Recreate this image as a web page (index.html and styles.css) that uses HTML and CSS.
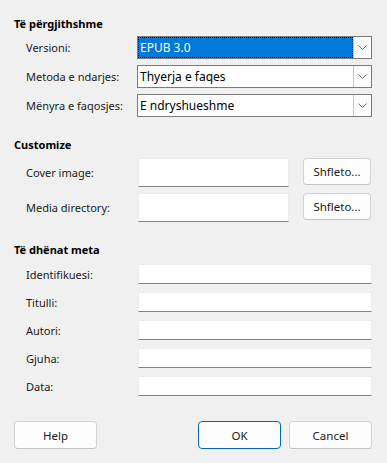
FILE: index.html
```html
<!DOCTYPE html>
<html>
<head>
<meta charset="utf-8">
<link rel="stylesheet" href="styles.css">
</head>
<body>
<div class="dialog">
  <div class="section-title">Të përgjithshme</div>
  <div class="rows rows-combo">
    <div class="row">
      <span class="label">Versioni:</span>
      <div class="combo">
        <div class="value focused">EPUB 3.0</div>
        <div class="drop"><svg width="9" height="5" viewBox="0 0 9 5"><path d="M0.5 0.5 L4.5 4.5 L8.5 0.5" fill="none" stroke="#6b6b6b" stroke-width="1"/></svg></div>
      </div>
    </div>
    <div class="row">
      <span class="label">Metoda e ndarjes:</span>
      <div class="combo">
        <div class="value">Thyerja e faqes</div>
        <div class="drop"><svg width="9" height="5" viewBox="0 0 9 5"><path d="M0.5 0.5 L4.5 4.5 L8.5 0.5" fill="none" stroke="#6b6b6b" stroke-width="1"/></svg></div>
      </div>
    </div>
    <div class="row">
      <span class="label">Mënyra e faqosjes:</span>
      <div class="combo">
        <div class="value">E ndryshueshme</div>
        <div class="drop"><svg width="9" height="5" viewBox="0 0 9 5"><path d="M0.5 0.5 L4.5 4.5 L8.5 0.5" fill="none" stroke="#6b6b6b" stroke-width="1"/></svg></div>
      </div>
    </div>
  </div>

  <div class="section-title title-2">Customize</div>
  <div class="rows rows-custom">
    <div class="row row-custom">
      <span class="label label-wide">Cover image:</span>
      <div class="field field-custom"></div>
      <button class="btn btn-browse">Shfleto...</button>
    </div>
    <div class="row row-custom">
      <span class="label label-wide">Media directory:</span>
      <div class="field field-custom"></div>
      <button class="btn btn-browse">Shfleto...</button>
    </div>
  </div>

  <div class="section-title title-3">Të dhënat meta</div>
  <div class="rows rows-meta">
    <div class="row row-meta"><span class="label label-wide">Identifikuesi:</span><div class="field field-meta"></div></div>
    <div class="row row-meta"><span class="label label-wide">Titulli:</span><div class="field field-meta"></div></div>
    <div class="row row-meta"><span class="label label-wide">Autori:</span><div class="field field-meta"></div></div>
    <div class="row row-meta"><span class="label label-wide">Gjuha:</span><div class="field field-meta"></div></div>
    <div class="row row-meta"><span class="label label-wide">Data:</span><div class="field field-meta"></div></div>
  </div>

  <div class="actions">
    <button class="btn btn-action">Help</button>
    <div class="spacer"></div>
    <button class="btn btn-action btn-default">OK</button>
    <button class="btn btn-action">Cancel</button>
  </div>
</div>
</body>
</html>
```

FILE: styles.css
```css
html, body {
  margin: 0;
  padding: 0;
  background: #f0f0f0;
}
body {
  font-family: "Segoe UI", "Noto Sans", sans-serif;
  font-size: 11px;
  color: #000;
}
.dialog {
  width: 387px;
  height: 463px;
  box-sizing: border-box;
  padding: 16px 15px 0 14px;
}
.section-title {
  font-weight: bold;
  height: 16px;
  line-height: 16px;
}
.title-2 { margin-top: 20px; }
.title-3 { margin-top: 20px; }
.rows {
  display: flex;
  flex-direction: column;
}
.rows-combo { margin-top: 4px; gap: 6px; }
.rows-custom { margin-top: 5px; gap: 6px; }
.rows-meta { margin-top: 6px; gap: 8px; }
.row {
  display: flex;
  align-items: center;
  height: 23px;
}
.row-custom {
  height: 29px;
  align-items: flex-start;
}
.row-meta { height: 20px; }
.label {
  box-sizing: border-box;
  width: 123px;
  padding-left: 12px;
  white-space: nowrap;
  color: #1a1a1a;
}
.row-custom .label { line-height: 29px; }
.label-wide { width: 124px; }
.combo {
  box-sizing: border-box;
  width: 235px;
  height: 23px;
  border: 1px solid #7a7a7a;
  background: #fff;
  display: flex;
}
.value {
  flex: 1;
  padding-left: 2px;
  line-height: 21px;
  white-space: nowrap;
  font-size: 12px;
}
.value.focused {
  background: #0078d7;
  color: #fff;
  outline: 1px dotted #000;
  outline-offset: -1px;
}
.drop {
  width: 17px;
  border-left: 1px solid #c8c8c8;
  background: #fcfcfc;
  display: flex;
  align-items: center;
  justify-content: center;
}
.field {
  box-sizing: border-box;
  background: #fff;
  border: 1px solid #ececec;
  border-bottom: 1px solid #858585;
}
.field-custom {
  width: 151px;
  height: 29px;
}
.field-meta {
  width: 234px;
  height: 20px;
}
.btn {
  box-sizing: border-box;
  font-family: inherit;
  font-size: 11.5px;
  color: #1a1a1a;
  background: #fdfdfd;
  border: 1px solid #d3d3d3;
  border-bottom-color: #c2c2c2;
  border-radius: 4px;
  padding: 0;
  margin: 0;
}
.btn-browse {
  width: 68px;
  height: 27px;
  margin-left: 14px;
}
.actions {
  display: flex;
  margin-top: 25px;
  gap: 8px;
}
.spacer { flex: 1; }
.btn-action {
  width: 83px;
  height: 28px;
}
.btn-default {
  border: 1px solid #0067c0;
}
```
